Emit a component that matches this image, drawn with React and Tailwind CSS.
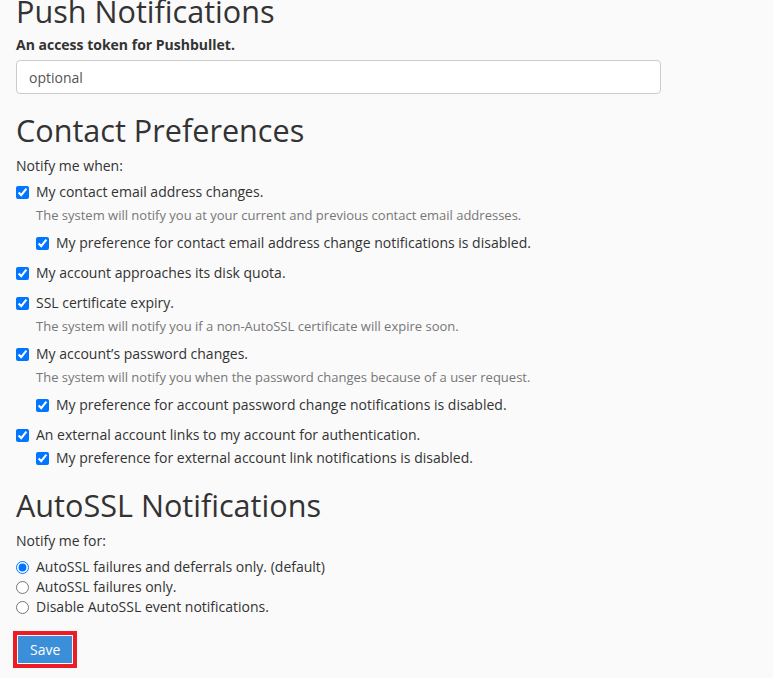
export default function App() {
  const items = [
    {
      label: "My contact email address changes.",
      desc: "The system will notify you at your current and previous contact email addresses.",
      nested: "My preference for contact email address change notifications is disabled.",
    },
    { label: "My account approaches its disk quota." },
    {
      label: "SSL certificate expiry.",
      desc: "The system will notify you if a non-AutoSSL certificate will expire soon.",
    },
    {
      label: "My account’s password changes.",
      desc: "The system will notify you when the password changes because of a user request.",
      nested: "My preference for account password change notifications is disabled.",
    },
    {
      label: "An external account links to my account for authentication.",
      nested: "My preference for external account link notifications is disabled.",
    },
  ];

  const radios = [
    "AutoSSL failures and deferrals only. (default)",
    "AutoSSL failures only.",
    "Disable AutoSSL event notifications.",
  ];

  return (
    <div className="min-h-[678px] bg-[#fafafa] px-4 text-[#333] text-[14px] font-['Open_Sans',sans-serif] overflow-hidden">
      {/* Push */}
      <h2 className="-mt-[5px] text-[30.6px] leading-[33px] font-normal">Push Notifications</h2>
      <label className="block mt-[7px] font-bold leading-5">An access token for Pushbullet.</label>
      <input
        className="mt-[5px] block w-[645px] h-[34px] px-3 bg-white border border-[#ccc] rounded-[4px] text-[14px] text-[#555] placeholder:text-[#555] outline-none"
        placeholder="optional"
      />

      {/* Contact */}
      <h2 className="mt-[20px] text-[30.6px] leading-[33px] font-normal">Contact Preferences</h2>
      <p className="mt-[9px] leading-5">Notify me when:</p>
      <div className="mt-[6px] flex flex-col gap-[10px]">
        {items.map((it) => (
          <div key={it.label}>
            <label className="flex items-center gap-[7px] leading-5">
              <input type="checkbox" defaultChecked className="w-[13px] h-[13px] m-0 accent-[#0075ff]" />
              {it.label}
            </label>
            {it.desc && (
              <p className={`pl-5 mt-[3px] text-[13px] leading-5 text-[#777] ${it.nested ? "" : "-mb-[2px]"}`}>
                {it.desc}
              </p>
            )}
            {it.nested && (
              <label
                className={`flex items-center gap-[7px] pl-5 leading-5 ${it.desc ? "mt-[8px]" : "mt-[3px]"}`}
              >
                <input type="checkbox" defaultChecked className="w-[13px] h-[13px] m-0 accent-[#0075ff]" />
                {it.nested}
              </label>
            )}
          </div>
        ))}
      </div>

      {/* AutoSSL */}
      <h2 className="mt-[21px] text-[30.6px] leading-[33px] font-normal">AutoSSL Notifications</h2>
      <p className="mt-[9px] leading-5">Notify me for:</p>
      <div className="mt-[6px] flex flex-col">
        {radios.map((r, i) => (
          <label key={r} className="flex items-center gap-[7px] leading-5">
            <input type="radio" name="autossl" defaultChecked={i === 0} className="w-[13px] h-[13px] m-0 accent-[#0075ff]" />
            {r}
          </label>
        ))}
      </div>

      <div className="mt-[14px] inline-block border-4 border-[#ed1c24] p-px -ml-[3px]">
        <button className="block h-[27px] px-3 bg-[#3a8fd8] text-white text-[14px] leading-5">Save</button>
      </div>
    </div>
  );
}
